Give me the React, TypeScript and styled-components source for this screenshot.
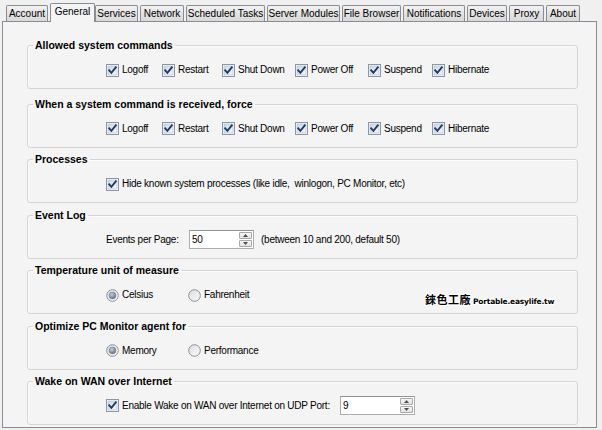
import React from "react";
import styled, { createGlobalStyle, css } from "styled-components";

const Global = createGlobalStyle`
  html, body { margin: 0; padding: 0; background: #f0f0f0; }
  body { font-family: "Liberation Sans", Arial, sans-serif; font-size: 10px; color: #000; }
  * { box-sizing: border-box; }
`;

const Window = styled.div`
  width: 602px;
  height: 430px;
  background: #f0f0f0;
  display: flex;
  flex-direction: column;
  overflow: hidden;
`;

const TabStrip = styled.div`
  height: 21px;
  display: flex;
  align-items: flex-end;
  padding-left: 6px;
  position: relative;
  z-index: 2;
`;

const Tab = styled.div<{ $w: number; $active?: boolean }>`
  width: ${(p) => p.$w - (p.$active ? 0 : 2)}px;
  margin-right: ${(p) => (p.$active ? 0 : 2)}px;
  height: 16px;
  border: 1px solid #898c95;
  border-bottom: none;
  border-radius: 2px 2px 0 0;
  background: linear-gradient(#f3f3f3, #e3e3e3 50%, #d9d9d9);
  display: flex;
  align-items: center;
  justify-content: center;
  white-space: nowrap;
  font-size: 10px;
  line-height: 12px;
  padding-top: 1px;
  ${(p) =>
    p.$active &&
    css`
      height: 19px;
      margin-bottom: -1px;
      background: #f4f4f4;
      padding-top: 0;
      padding-bottom: 2px;
    `}
`;

const Panel = styled.div`
  position: relative;
  width: 595px;
  margin-left: 2px;
  height: 407px;
  border: 1px solid #898c95;
  background: #f4f4f4;
  padding: 17px 18px 0 24px;
  display: flex;
  flex-direction: column;
  gap: 5.4px;
`;

const Group = styled.fieldset`
  margin: 0;
  padding: 9px 0 9px 5px;
  border: 1px solid #d5d5d5;
  border-radius: 3px;
  box-shadow: inset 1px 1px 0 #fcfcfc;
  min-width: 0;
  &:first-child { margin-bottom: 3.6px; }
`;

const Legend = styled.legend`
  padding: 0 2px;
  font-weight: bold;
  font-size: 10.5px;
  line-height: 13px;
`;

const Row = styled.div<{ $cols?: string }>`
  margin-left: 73px;
  height: 18px;
  display: ${(p) => (p.$cols ? "grid" : "flex")};
  grid-template-columns: ${(p) => p.$cols || "none"};
  align-items: center;
  letter-spacing: -0.25px;
`;

const Option = styled.label`
  display: flex;
  align-items: center;
  gap: 3px;
  white-space: nowrap;
  line-height: 12px;
`;

const Text = styled.span<{ $w?: number; $gap?: number }>`
  white-space: nowrap;
  line-height: 12px;
  ${(p) => p.$w && css`width: ${p.$w}px;`}
  ${(p) => p.$gap && css`margin-left: ${p.$gap}px;`}
`;

const SpinBox = styled.div<{ $w: number; $gap?: number }>`
  width: ${(p) => p.$w}px;
  height: 19px;
  border: 1px solid #abadb3;
  border-top-color: #8e929c;
  background: #fff;
  display: flex;
  align-items: stretch;
  margin-left: ${(p) => p.$gap || 0}px;
`;

const SpinValue = styled.span`
  flex: 1;
  padding-left: 2px;
  line-height: 17px;
`;

const SpinButtons = styled.div`
  width: 15px;
  display: flex;
  flex-direction: column;
  gap: 1px;
  padding: 1px;
`;

const SpinButton = styled.div`
  flex: 1;
  border: 1px solid #a9a9a9;
  border-radius: 1px;
  background: linear-gradient(#f6f6f6, #e2e2e2);
  display: flex;
  align-items: center;
  justify-content: center;
`;

const Watermark = styled.div`
  position: absolute;
  left: 422px;
  top: 271px;
  display: flex;
  align-items: baseline;
  font-weight: bold;
  color: #000;
  text-shadow: 1px 0 #fff, -1px 0 #fff, 0 1px #fff, 0 -1px #fff, 1px 1px #fff, -1px -1px #fff, 1px -1px #fff, -1px 1px #fff;
`;

const WmCjk = styled.span`
  font-family: "Noto Sans CJK TC", "Noto Sans CJK SC", sans-serif;
  font-size: 11px;
  line-height: 13px;
  letter-spacing: 0.5px;
`;

const WmLatin = styled.span`
  font-family: "DejaVu Sans", sans-serif;
  font-size: 7.5px;
  letter-spacing: -0.2px;
  margin-left: 2px;
`;

const CheckBox = () => (
  <svg width="13" height="13" viewBox="0 0 13 13">
    <defs>
      <linearGradient id="cbg" x1="0" y1="0" x2="1" y2="1">
        <stop offset="0" stopColor="#cdd9e6" />
        <stop offset="1" stopColor="#f4f7fa" />
      </linearGradient>
    </defs>
    <rect x="0.5" y="0.5" width="12" height="12" fill="#fff" stroke="#8a97a8" />
    <rect x="2" y="2" width="9" height="9" fill="url(#cbg)" stroke="#aab6c4" strokeWidth="0.6" />
    <path d="M3.2 6.3 L5.4 8.8 L9.8 3.4" fill="none" stroke="#1f3a66" strokeWidth="1.9" strokeLinecap="square" />
  </svg>
);

const Radio = ({ on }: { on?: boolean }) => (
  <svg width="13" height="13" viewBox="0 0 13 13">
    <defs>
      <linearGradient id="rbg" x1="0" y1="0" x2="1" y2="1">
        <stop offset="0" stopColor="#d9dde2" />
        <stop offset="1" stopColor="#fbfbfb" />
      </linearGradient>
      <radialGradient id="rdot" cx="0.4" cy="0.35" r="0.7">
        <stop offset="0" stopColor="#c9d2dc" />
        <stop offset="1" stopColor="#56687f" />
      </radialGradient>
    </defs>
    <circle cx="6.5" cy="6.5" r="5.8" fill="url(#rbg)" stroke="#8e8f8f" strokeWidth="1" />
    {on && <circle cx="6.5" cy="6.5" r="3.4" fill="url(#rdot)" stroke="#7a8797" strokeWidth="0.6" />}
  </svg>
);

const Arrow = ({ up }: { up?: boolean }) => (
  <svg width="5" height="3" viewBox="0 0 5 3">
    <path d={up ? "M0 3 L2.5 0 L5 3 Z" : "M0 0 L2.5 3 L5 0 Z"} fill="#4d4d4d" />
  </svg>
);

const Spin = ({ value, w, gap }: { value: string; w: number; gap?: number }) => (
  <SpinBox $w={w} $gap={gap}>
    <SpinValue>{value}</SpinValue>
    <SpinButtons>
      <SpinButton><Arrow up /></SpinButton>
      <SpinButton><Arrow /></SpinButton>
    </SpinButtons>
  </SpinBox>
);

const tabs = [
  { label: "Account", w: 44 },
  { label: "General", w: 45, active: true },
  { label: "Services", w: 45 },
  { label: "Network", w: 46 },
  { label: "Scheduled Tasks", w: 81 },
  { label: "Server Modules", w: 75 },
  { label: "File Browser", w: 61 },
  { label: "Notifications", w: 64 },
  { label: "Devices", w: 42 },
  { label: "Proxy", w: 37 },
  { label: "About", w: 36 },
];

const commands = ["Logoff", "Restart", "Shut Down", "Power Off", "Suspend", "Hibernate"];
const cmdCols = "56px 60px 73px 73px 64px auto";

export default function App() {
  return (
    <>
      <Global />
      <Window>
        <TabStrip>
          {tabs.map((t) => (
            <Tab key={t.label} $w={t.w} $active={t.active}>
              {t.label}
            </Tab>
          ))}
        </TabStrip>
        <Panel>
          <Group>
            <Legend>Allowed system commands</Legend>
            <Row $cols={cmdCols}>
              {commands.map((c) => (
                <Option key={c}><CheckBox />{c}</Option>
              ))}
            </Row>
          </Group>
          <Group>
            <Legend>When a system command is received, force</Legend>
            <Row $cols={cmdCols}>
              {commands.map((c) => (
                <Option key={c}><CheckBox />{c}</Option>
              ))}
            </Row>
          </Group>
          <Group>
            <Legend>Processes</Legend>
            <Row>
              <Option><CheckBox />Hide known system processes (like idle,&nbsp; winlogon, PC Monitor, etc)</Option>
            </Row>
          </Group>
          <Group>
            <Legend>Event Log</Legend>
            <Row>
              <Text $w={83}>Events per Page:</Text>
              <Spin value="50" w={65} />
              <Text $gap={7}>(between 10 and 200, default 50)</Text>
            </Row>
          </Group>
          <Group>
            <Legend>Temperature unit of measure</Legend>
            <Row $cols="82px auto">
              <Option><Radio on />Celsius</Option>
              <Option><Radio />Fahrenheit</Option>
            </Row>
          </Group>
          <Group>
            <Legend>Optimize PC Monitor agent for</Legend>
            <Row $cols="82px auto">
              <Option><Radio on />Memory</Option>
              <Option><Radio />Performance</Option>
            </Row>
          </Group>
          <Group>
            <Legend>Wake on WAN over Internet</Legend>
            <Row>
              <Option><CheckBox />Enable Wake on WAN over Internet on UDP Port:</Option>
              <Spin value="9" w={75} gap={10} />
            </Row>
          </Group>
          <Watermark>
            <WmCjk>錸色工廠</WmCjk>
            <WmLatin>Portable.easylife.tw</WmLatin>
          </Watermark>
        </Panel>
      </Window>
    </>
  );
}
